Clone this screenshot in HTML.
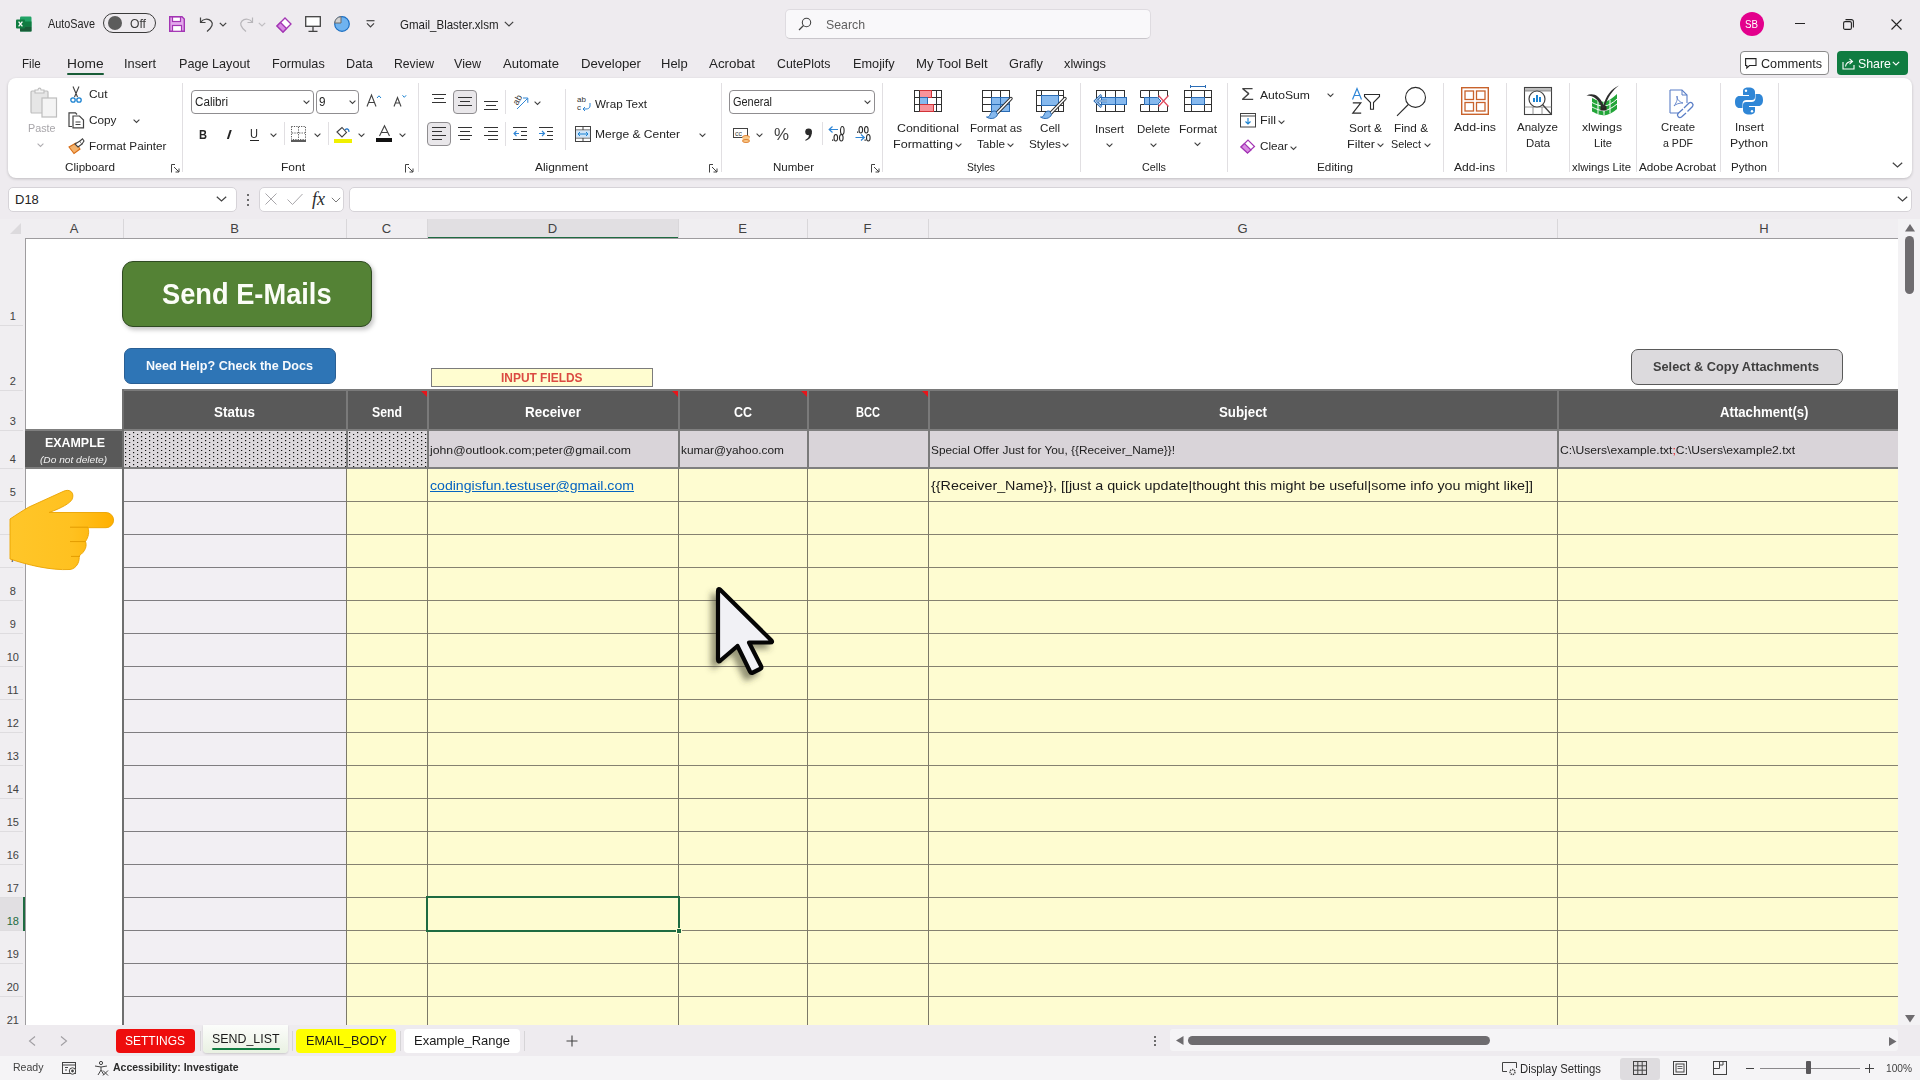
<!DOCTYPE html>
<html><head><meta charset="utf-8">
<style>
*{box-sizing:border-box}
html,body{margin:0;padding:0}
body{width:1920px;height:1080px;overflow:hidden;position:relative;background:#eeebef;font-family:"Liberation Sans",sans-serif;color:#242424}
.a{position:absolute}
.t{position:absolute;white-space:nowrap}
svg{position:absolute;overflow:visible}
</style></head><body>
<svg style="left:16px;top:16px;" width="16" height="16" viewBox="0 0 16 16"><rect x="4" y="0.5" width="11.5" height="15" rx="1.2" fill="#21a366"/>
<rect x="4" y="5.5" width="11.5" height="5" fill="#107c41"/>
<rect x="4" y="10.5" width="11.5" height="5" rx="0" fill="#185c37"/>
<rect x="0" y="3.5" width="9" height="9" rx="1" fill="#107c41"/>
<path d="M2.6 5.6 L6.4 10.4 M6.4 5.6 L2.6 10.4" stroke="#fff" stroke-width="1.3"/></svg>
<div class="t" style="left:48.00px;top:17.84px;font-size:12px;line-height:12px;color:#242424;transform:scaleX(0.9032);transform-origin:0 0;">AutoSave</div>
<div class="a" style="left:103px;top:13px;width:53px;height:20px;background:none;border:1.3px solid #3b3b3b;border-radius:10px"></div>
<div class="a" style="left:108px;top:16px;width:14px;height:14px;background:#5c5c5c;border-radius:50%"></div>
<div class="t" style="left:130.00px;top:17.84px;font-size:12px;line-height:12px;color:#3b3b3b;transform:scaleX(1.0136);transform-origin:0 0;">Off</div>
<svg style="left:169px;top:16px;" width="16" height="16" viewBox="0 0 16 16"><path d="M0.7 0.7 H13 L15.3 3 V15.3 H0.7 Z" fill="#e3a9ec" stroke="#a335b4" stroke-width="1.4"/>
<rect x="3.5" y="1" width="8" height="4.5" fill="#fff" stroke="#a335b4" stroke-width="1.2"/>
<rect x="3.5" y="9.5" width="9" height="5.8" fill="#fff" stroke="#a335b4" stroke-width="1.2"/></svg>
<svg style="left:199px;top:16px;" width="16" height="16" viewBox="0 0 16 16"><path d="M1.5 1.5 V6.5 H6.5" fill="none" stroke="#424242" stroke-width="1.2"/>
<path d="M1.8 6.2 C4 3 9 2 12 5 C14.5 7.5 13.5 11 8 15.5" fill="none" stroke="#424242" stroke-width="1.2"/></svg>
<svg style="left:219px;top:22px;" width="8" height="5" viewBox="0 0 8 5"><path d="M0.8 0.8 L4 4 L7.2 0.8" fill="none" stroke="#424242" stroke-width="1.2"/></svg>
<svg style="left:238px;top:16px;" width="16" height="16" viewBox="0 0 16 16"><path d="M14.5 1.5 V6.5 H9.5" fill="none" stroke="#b8b6ba" stroke-width="1.2"/>
<path d="M14.2 6.2 C12 3 7 2 4 5 C1.5 7.5 2.5 11 8 15.5" fill="none" stroke="#b8b6ba" stroke-width="1.2"/></svg>
<svg style="left:258px;top:22px;" width="8" height="5" viewBox="0 0 8 5"><path d="M0.8 0.8 L4 4 L7.2 0.8" fill="none" stroke="#c0bec2" stroke-width="1.2"/></svg>
<svg style="left:276px;top:16px;" width="16" height="16" viewBox="0 0 16 16"><path d="M1 10 L9 2 L15 8 L7 16 Z" fill="#fff" stroke="#a335b4" stroke-width="1.3"/>
<path d="M1 10 L4.5 6.5 L10.5 12.5 L7 16 Z" fill="#d88be3" stroke="#a335b4" stroke-width="1.3"/></svg>
<svg style="left:305px;top:16px;" width="16" height="16" viewBox="0 0 16 16"><rect x="0.7" y="0.7" width="14.6" height="9.6" fill="#fff" stroke="#424242" stroke-width="1.3"/>
<path d="M8 10.5 V15 M3.5 15.3 H12.5" stroke="#424242" stroke-width="1.3"/></svg>
<svg style="left:334px;top:16px;" width="16" height="16" viewBox="0 0 16 16"><circle cx="8" cy="8" r="7.3" fill="#6fb3f0" stroke="#1b6ec2" stroke-width="1.2"/>
<path d="M7 7 V0.7 A7 7 0 0 0 0.7 7 Z" fill="#d2d2d2" stroke="#6b6b6b" stroke-width="1"/></svg>
<svg style="left:366px;top:20px;" width="9" height="8" viewBox="0 0 9 8"><path d="M0.5 0.7 H8.5" stroke="#424242" stroke-width="1.2"/><path d="M1 3.3 L4.5 6.8 L8 3.3" fill="none" stroke="#424242" stroke-width="1.2"/></svg>
<div class="t" style="left:400.00px;top:18.00px;font-size:13px;line-height:13px;color:#242424;transform:scaleX(0.8854);transform-origin:0 0;">Gmail_Blaster.xlsm</div>
<svg style="left:504px;top:21px;" width="10" height="6" viewBox="0 0 10 6"><path d="M0.8 0.8 L5 5 L9.2 0.8" fill="none" stroke="#424242" stroke-width="1.2"/></svg>
<div class="a" style="left:785px;top:9px;width:366px;height:30px;background:#f9f8fa;border:1px solid #dedbe0;border-bottom-color:#c9c6cb;border-radius:5px"></div>
<svg style="left:798px;top:17px;" width="14" height="14" viewBox="0 0 14 14"><circle cx="8.5" cy="5.5" r="4.2" fill="none" stroke="#424242" stroke-width="1.1"/><path d="M5.5 8.5 L1 13" stroke="#424242" stroke-width="1.2"/></svg>
<div class="t" style="left:826.00px;top:18.00px;font-size:13px;line-height:13px;color:#5f5f5f;transform:scaleX(0.9468);transform-origin:0 0;">Search</div>
<div class="a" style="left:1740px;top:12px;width:24px;height:24px;background:#e3008c;border-radius:50%"></div>
<div class="t" style="left:1745.00px;top:19.54px;font-size:10px;line-height:10px;color:#fff;transform:scaleX(0.9745);transform-origin:0 0;">SB</div>
<div class="a" style="left:1795px;top:23px;width:10px;height:1px;background:#242424;"></div>
<svg style="left:1843px;top:19px;" width="11" height="11" viewBox="0 0 11 11"><rect x="0.6" y="2.6" width="7.8" height="7.8" rx="1.5" fill="none" stroke="#242424" stroke-width="1.1"/><path d="M2.5 0.6 H8.4 A2 2 0 0 1 10.4 2.6 V8.5" fill="none" stroke="#242424" stroke-width="1.1"/></svg>
<svg style="left:1891px;top:19px;" width="11" height="11" viewBox="0 0 11 11"><path d="M0.5 0.5 L10.5 10.5 M10.5 0.5 L0.5 10.5" stroke="#242424" stroke-width="1.1"/></svg>
<div class="t" style="left:22.00px;top:57.00px;font-size:13px;line-height:13px;color:#242424;transform:scaleX(0.8927);transform-origin:0 0;">File</div>
<div class="t" style="left:67.30px;top:57.00px;font-size:13px;line-height:13px;color:#242424;transform:scaleX(1.0583);transform-origin:0 0;">Home</div>
<div class="t" style="left:124.00px;top:57.00px;font-size:13px;line-height:13px;color:#242424;transform:scaleX(0.9842);transform-origin:0 0;">Insert</div>
<div class="t" style="left:179.00px;top:57.00px;font-size:13px;line-height:13px;color:#242424;transform:scaleX(0.9725);transform-origin:0 0;">Page Layout</div>
<div class="t" style="left:272.00px;top:57.00px;font-size:13px;line-height:13px;color:#242424;transform:scaleX(0.9727);transform-origin:0 0;">Formulas</div>
<div class="t" style="left:346.00px;top:57.00px;font-size:13px;line-height:13px;color:#242424;transform:scaleX(0.9723);transform-origin:0 0;">Data</div>
<div class="t" style="left:394.00px;top:57.00px;font-size:13px;line-height:13px;color:#242424;transform:scaleX(0.9384);transform-origin:0 0;">Review</div>
<div class="t" style="left:454.00px;top:57.00px;font-size:13px;line-height:13px;color:#242424;transform:scaleX(0.9662);transform-origin:0 0;">View</div>
<div class="t" style="left:502.70px;top:57.00px;font-size:13px;line-height:13px;color:#242424;transform:scaleX(1.0064);transform-origin:0 0;">Automate</div>
<div class="t" style="left:581.00px;top:57.00px;font-size:13px;line-height:13px;color:#242424;transform:scaleX(1.0125);transform-origin:0 0;">Developer</div>
<div class="t" style="left:661.00px;top:57.00px;font-size:13px;line-height:13px;color:#242424;transform:scaleX(0.9986);transform-origin:0 0;">Help</div>
<div class="t" style="left:709.00px;top:57.00px;font-size:13px;line-height:13px;color:#242424;transform:scaleX(1.0267);transform-origin:0 0;">Acrobat</div>
<div class="t" style="left:777.30px;top:57.00px;font-size:13px;line-height:13px;color:#242424;transform:scaleX(0.9474);transform-origin:0 0;">CutePlots</div>
<div class="t" style="left:853.30px;top:57.00px;font-size:13px;line-height:13px;color:#242424;transform:scaleX(0.9784);transform-origin:0 0;">Emojify</div>
<div class="t" style="left:916.00px;top:57.00px;font-size:13px;line-height:13px;color:#242424;transform:scaleX(1.0160);transform-origin:0 0;">My Tool Belt</div>
<div class="t" style="left:1009.30px;top:57.00px;font-size:13px;line-height:13px;color:#242424;transform:scaleX(0.9806);transform-origin:0 0;">Grafly</div>
<div class="t" style="left:1063.70px;top:57.00px;font-size:13px;line-height:13px;color:#242424;transform:scaleX(0.9853);transform-origin:0 0;">xlwings</div>
<div class="a" style="left:67px;top:73px;width:37px;height:2px;background:#185c37;border-radius:1px"></div>
<div class="a" style="left:1740px;top:51px;width:89px;height:24px;background:#fff;border:1px solid #8a8a8a;border-radius:4px"></div>
<svg style="left:1745px;top:58px;" width="12" height="11" viewBox="0 0 12 11"><path d="M0.6 0.6 H11 V7.5 H4.5 L1.8 10 V7.5 H0.6 Z" fill="none" stroke="#242424" stroke-width="1.1"/></svg>
<div class="t" style="left:1761.00px;top:57.00px;font-size:13px;line-height:13px;color:#242424;transform:scaleX(0.9706);transform-origin:0 0;">Comments</div>
<div class="a" style="left:1837px;top:51px;width:71px;height:24px;background:#107c41;border-radius:4px"></div>
<svg style="left:1842px;top:57px;" width="13" height="13" viewBox="0 0 13 13"><path d="M1 5 V12 H12 V8" fill="none" stroke="#fff" stroke-width="1.1"/><path d="M3.5 9.5 C4 6 6.5 4.5 10 4.5 M7.5 1.8 L10.5 4.5 L7.5 7.2" fill="none" stroke="#fff" stroke-width="1.1"/></svg>
<div class="t" style="left:1858.00px;top:57.00px;font-size:13px;line-height:13px;color:#fff;transform:scaleX(0.9512);transform-origin:0 0;">Share</div>
<svg style="left:1892px;top:61px;" width="8" height="5" viewBox="0 0 8 5"><path d="M0.8 0.8 L4 4 L7.2 0.8" fill="none" stroke="#fff" stroke-width="1.1"/></svg>
<div class="a" style="left:8px;top:78px;width:1904px;height:100px;background:#fff;border-radius:8px;box-shadow:0 1px 3px rgba(0,0,0,.2)"></div>
<svg style="left:30px;top:86px;" width="28" height="32" viewBox="0 0 28 32"><rect x="1" y="5" width="17" height="22" rx="1" fill="#e6e6e6" stroke="#bdbdbd" stroke-width="1.2"/>
<path d="M5 4 H8 C8 1.5 11 1.5 11 4 H14 V7 H5 Z" fill="#f4f4f4" stroke="#bdbdbd" stroke-width="1.1"/>
<rect x="12" y="12" width="14.5" height="19" fill="#f4f4f4" stroke="#bdbdbd" stroke-width="1.2"/></svg>
<div class="t" style="left:27.50px;top:123.07px;font-size:11.5px;line-height:11.5px;color:#a8a6aa;transform:scaleX(0.9351);transform-origin:0 0;">Paste</div>
<svg style="left:37px;top:143px;" width="7" height="4" viewBox="0 0 7 4"><path d="M0.6 0.6 L3.5 3.4 L6.4 0.6" fill="none" stroke="#b0aeb2" stroke-width="1.1"/></svg>
<svg style="left:70px;top:86px;" width="12" height="17" viewBox="0 0 12 17"><path d="M3 0.5 L7.5 11 M9 0.5 L4.5 11" stroke="#424242" stroke-width="1.1"/>
<circle cx="3" cy="14" r="2.2" fill="none" stroke="#1b82d1" stroke-width="1.3"/><circle cx="9" cy="14" r="2.2" fill="none" stroke="#1b82d1" stroke-width="1.3"/></svg>
<div class="t" style="left:88.50px;top:89.07px;font-size:11.5px;line-height:11.5px;color:#242424;transform:scaleX(1.0338);transform-origin:0 0;">Cut</div>
<svg style="left:68px;top:112px;" width="17" height="17" viewBox="0 0 17 17"><path d="M4 14.5 H1 V0.8 H7.5 L9 2.5" fill="none" stroke="#424242" stroke-width="1.2"/>
<path d="M5 4 H11.5 L15.5 8 V15.8 H5 Z" fill="#fff" stroke="#424242" stroke-width="1.2"/><path d="M7.5 10 H12.5 M7.5 12.5 H12.5" stroke="#424242" stroke-width="1"/></svg>
<div class="t" style="left:88.50px;top:114.87px;font-size:11.5px;line-height:11.5px;color:#242424;transform:scaleX(1.0243);transform-origin:0 0;">Copy</div>
<svg style="left:133px;top:119px;" width="7" height="4" viewBox="0 0 7 4"><path d="M0.6 0.6 L3.5 3.4 L6.4 0.6" fill="none" stroke="#424242" stroke-width="1.1"/></svg>
<svg style="left:68px;top:138px;" width="17" height="16" viewBox="0 0 17 16"><path d="M1 9 L8 5 L12 11 L6 15.5 Z" fill="#f4b26b" stroke="#d86d16" stroke-width="1.1"/>
<path d="M7 6 L12 3 L14 6 L10 9 Z" fill="#fff" stroke="#424242" stroke-width="1.1"/><path d="M12 3 L14.5 0.8 L16 3 L14 6" fill="#fff" stroke="#424242" stroke-width="1.1"/></svg>
<div class="t" style="left:88.50px;top:141.17px;font-size:11.5px;line-height:11.5px;color:#242424;transform:scaleX(1.0190);transform-origin:0 0;">Format Painter</div>
<div class="t" style="left:64.50px;top:162.27px;font-size:11.5px;line-height:11.5px;color:#242424;transform:scaleX(1.0157);transform-origin:0 0;">Clipboard</div>
<svg style="left:171px;top:164px;" width="9" height="9" viewBox="0 0 9 9"><path d="M0.5 8.5 V0.5 H4" fill="none" stroke="#424242" stroke-width="1"/><path d="M3 3 L8 8 M8 4.5 V8 H4.5" fill="none" stroke="#424242" stroke-width="1"/></svg>
<div class="a" style="left:182px;top:83px;width:1px;height:89px;background:#e1dfe2;"></div>
<div class="a" style="left:191px;top:90px;width:123px;height:24px;background:#fff;border:1px solid #8f8d90;border-radius:4px"></div>
<div class="t" style="left:195.00px;top:96.34px;font-size:12px;line-height:12px;color:#242424;transform:scaleX(0.9703);transform-origin:0 0;">Calibri</div>
<svg style="left:303px;top:100px;" width="7" height="4" viewBox="0 0 7 4"><path d="M0.6 0.6 L3.5 3.4 L6.4 0.6" fill="none" stroke="#424242" stroke-width="1.1"/></svg>
<div class="a" style="left:316px;top:90px;width:43px;height:24px;background:#fff;border:1px solid #8f8d90;border-radius:4px"></div>
<div class="t" style="left:318.50px;top:96.34px;font-size:12px;line-height:12px;color:#242424;transform:scaleX(0.9739);transform-origin:0 0;">9</div>
<svg style="left:349px;top:100px;" width="7" height="4" viewBox="0 0 7 4"><path d="M0.6 0.6 L3.5 3.4 L6.4 0.6" fill="none" stroke="#424242" stroke-width="1.1"/></svg>
<svg style="left:366px;top:94px;" width="16" height="13" viewBox="0 0 16 13"><path d="M1 12.5 L5.5 1 L10 12.5 M2.8 8.5 H8.2" fill="none" stroke="#424242" stroke-width="1.1"/><path d="M11 4 L13 1.8 L15 4" fill="none" stroke="#1b82d1" stroke-width="1"/></svg>
<svg style="left:393px;top:94px;" width="14" height="13" viewBox="0 0 14 13"><path d="M1 12.5 L4.5 3.5 L8 12.5 M2.3 9 H6.7" fill="none" stroke="#424242" stroke-width="1.1"/><path d="M9.5 1.3 L11.3 3.3 L13.1 1.3" fill="none" stroke="#1b82d1" stroke-width="1"/></svg>
<div class="t" style="left:199.00px;top:127.50px;font-size:13px;line-height:13px;color:#242424;font-weight:bold;transform:scaleX(0.8521);transform-origin:0 0;">B</div>
<div class="t" style="left:226.00px;top:127.50px;font-size:13px;line-height:13px;color:#242424;font-style:italic;transform:scaleX(1.6613);transform-origin:0 0;">I</div>
<div class="t" style="left:250.00px;top:127.84px;font-size:12px;line-height:12px;color:#242424;transform:scaleX(0.9231);transform-origin:0 0;">U</div>
<div class="a" style="left:250px;top:140px;width:9px;height:1px;background:#242424;"></div>
<svg style="left:270px;top:133px;" width="7" height="4" viewBox="0 0 7 4"><path d="M0.6 0.6 L3.5 3.4 L6.4 0.6" fill="none" stroke="#424242" stroke-width="1.1"/></svg>
<div class="a" style="left:284px;top:122px;width:1px;height:23px;background:#e1dfe2;"></div>
<svg style="left:291px;top:126px;" width="15" height="16" viewBox="0 0 15 16"><rect x="0.5" y="0.5" width="14" height="13" fill="none" stroke="#424242" stroke-width="0.9" stroke-dasharray="1.2 1.2"/><path d="M7.5 1 V13 M1 7 H14" stroke="#424242" stroke-width="0.9" stroke-dasharray="1.2 1.2"/><path d="M0 15 H15" stroke="#242424" stroke-width="1.5"/></svg>
<svg style="left:314px;top:133px;" width="7" height="4" viewBox="0 0 7 4"><path d="M0.6 0.6 L3.5 3.4 L6.4 0.6" fill="none" stroke="#424242" stroke-width="1.1"/></svg>
<div class="a" style="left:328px;top:122px;width:1px;height:23px;background:#e1dfe2;"></div>
<svg style="left:334px;top:126px;" width="18" height="17" viewBox="0 0 18 17"><path d="M3 6 L8 1.5 L12.5 6.5 L8 11 Z" fill="#fff" stroke="#424242" stroke-width="1.1"/><path d="M11 4 C13 2 15 3 15 6" fill="none" stroke="#1b6ec2" stroke-width="1.2"/><rect x="0" y="13" width="18" height="4" fill="#f0f000"/></svg>
<svg style="left:358px;top:133px;" width="7" height="4" viewBox="0 0 7 4"><path d="M0.6 0.6 L3.5 3.4 L6.4 0.6" fill="none" stroke="#424242" stroke-width="1.1"/></svg>
<svg style="left:376px;top:125px;" width="17" height="18" viewBox="0 0 17 18"><path d="M3.5 11 L8.5 0.8 L13.5 11 M5.2 7.5 H11.8" fill="none" stroke="#424242" stroke-width="1.1"/><rect x="0" y="13" width="16" height="4" fill="#111"/></svg>
<svg style="left:399px;top:133px;" width="7" height="4" viewBox="0 0 7 4"><path d="M0.6 0.6 L3.5 3.4 L6.4 0.6" fill="none" stroke="#424242" stroke-width="1.1"/></svg>
<div class="t" style="left:281.00px;top:162.27px;font-size:11.5px;line-height:11.5px;color:#242424;transform:scaleX(1.0429);transform-origin:0 0;">Font</div>
<svg style="left:405px;top:164px;" width="9" height="9" viewBox="0 0 9 9"><path d="M0.5 8.5 V0.5 H4" fill="none" stroke="#424242" stroke-width="1"/><path d="M3 3 L8 8 M8 4.5 V8 H4.5" fill="none" stroke="#424242" stroke-width="1"/></svg>
<div class="a" style="left:418px;top:83px;width:1px;height:89px;background:#e1dfe2;"></div>
<svg style="left:432px;top:94px;" width="14" height="13" viewBox="0 0 14 13"><path d="M0.0 0.5 H14.0" stroke="#333" stroke-width="1"/><path d="M2.0 4.5 H12.0" stroke="#333" stroke-width="1"/><path d="M0.0 8.5 H14.0" stroke="#333" stroke-width="1"/></svg>
<div class="a" style="left:453px;top:90px;width:24px;height:24px;background:#e9e7ea;border:1px solid #8f8d90;border-radius:4px"></div>
<svg style="left:458px;top:97px;" width="14" height="13" viewBox="0 0 14 13"><path d="M0.0 0.5 H14.0" stroke="#333" stroke-width="1"/><path d="M2.0 4.5 H12.0" stroke="#333" stroke-width="1"/><path d="M0.0 8.5 H14.0" stroke="#333" stroke-width="1"/></svg>
<svg style="left:484px;top:101px;" width="14" height="13" viewBox="0 0 14 13"><path d="M0.0 0.5 H14.0" stroke="#333" stroke-width="1"/><path d="M2.0 4.5 H12.0" stroke="#333" stroke-width="1"/><path d="M0.0 8.5 H14.0" stroke="#333" stroke-width="1"/></svg>
<div class="a" style="left:505px;top:90px;width:1px;height:24px;background:#e1dfe2;"></div>
<svg style="left:512px;top:93px;" width="17" height="17" viewBox="0 0 17 17"><g transform="rotate(-60 6 6)"><text x="0" y="9" font-size="9" font-family="Liberation Sans" fill="#333">ab</text></g><path d="M5 16 L15.5 5.5 M11 5 H15.8 V9.8" fill="none" stroke="#2f86d6" stroke-width="1"/></svg>
<svg style="left:534px;top:101px;" width="7" height="4" viewBox="0 0 7 4"><path d="M0.6 0.6 L3.5 3.4 L6.4 0.6" fill="none" stroke="#424242" stroke-width="1.1"/></svg>
<div class="a" style="left:427px;top:122px;width:24px;height:24px;background:#e9e7ea;border:1px solid #8f8d90;border-radius:4px"></div>
<svg style="left:432px;top:127px;" width="14" height="17" viewBox="0 0 14 17"><path d="M0 0.5 H14" stroke="#333" stroke-width="1"/><path d="M0 4.5 H10" stroke="#333" stroke-width="1"/><path d="M0 8.5 H14" stroke="#333" stroke-width="1"/><path d="M0 12.5 H10" stroke="#333" stroke-width="1"/></svg>
<svg style="left:458px;top:127px;" width="14" height="17" viewBox="0 0 14 17"><path d="M0.0 0.5 H14.0" stroke="#333" stroke-width="1"/><path d="M2.0 4.5 H12.0" stroke="#333" stroke-width="1"/><path d="M0.0 8.5 H14.0" stroke="#333" stroke-width="1"/><path d="M2.0 12.5 H12.0" stroke="#333" stroke-width="1"/></svg>
<svg style="left:484px;top:127px;" width="14" height="17" viewBox="0 0 14 17"><path d="M0 0.5 H14" stroke="#333" stroke-width="1"/><path d="M4 4.5 H14" stroke="#333" stroke-width="1"/><path d="M0 8.5 H14" stroke="#333" stroke-width="1"/><path d="M4 12.5 H14" stroke="#333" stroke-width="1"/></svg>
<div class="a" style="left:505px;top:122px;width:1px;height:24px;background:#e1dfe2;"></div>
<svg style="left:513px;top:127px;" width="15" height="14" viewBox="0 0 15 14"><path d="M0 0.5 H14 M8 4.5 H14 M8 8.5 H14 M0 12.5 H14" stroke="#333" stroke-width="1"/><path d="M6 6.5 H1 M3.5 4 L1 6.5 L3.5 9" fill="none" stroke="#2f86d6" stroke-width="1.1"/></svg>
<svg style="left:539px;top:127px;" width="15" height="14" viewBox="0 0 15 14"><path d="M0 0.5 H14 M8 4.5 H14 M8 8.5 H14 M0 12.5 H14" stroke="#333" stroke-width="1"/><path d="M0 6.5 H5.5 M3 4 L5.5 6.5 L3 9" fill="none" stroke="#2f86d6" stroke-width="1.1"/></svg>
<div class="a" style="left:565px;top:89px;width:1px;height:61px;background:#e1dfe2;"></div>
<svg style="left:577px;top:95px;" width="15" height="16" viewBox="0 0 15 16"><text x="0" y="7" font-size="8" font-family="Liberation Sans" fill="#333">ab</text><text x="0" y="15" font-size="8" font-family="Liberation Sans" fill="#333">c</text><path d="M13 8 V11 C13 13 11 14 9 14 H6 M8 12 L6 14 L8 16" fill="none" stroke="#2f86d6" stroke-width="1"/></svg>
<div class="t" style="left:595.00px;top:98.77px;font-size:11.5px;line-height:11.5px;color:#242424;transform:scaleX(1.0127);transform-origin:0 0;">Wrap Text</div>
<svg style="left:575px;top:126px;" width="16" height="16" viewBox="0 0 16 16"><rect x="0.5" y="0.5" width="15" height="15" fill="#fff" stroke="#424242" stroke-width="1"/><path d="M0.5 4 H15.5 M0.5 12 H15.5 M8 0.5 V4 M8 12 V15.5" stroke="#424242" stroke-width="1"/><rect x="1" y="4.5" width="14" height="7" fill="#cfe4f7"/><path d="M3 8 H13 M5 6 L3 8 L5 10 M11 6 L13 8 L11 10" fill="none" stroke="#1b82d1" stroke-width="1"/></svg>
<div class="t" style="left:595.00px;top:129.27px;font-size:11.5px;line-height:11.5px;color:#242424;transform:scaleX(1.0471);transform-origin:0 0;">Merge &amp; Center</div>
<svg style="left:699px;top:133px;" width="7" height="4" viewBox="0 0 7 4"><path d="M0.6 0.6 L3.5 3.4 L6.4 0.6" fill="none" stroke="#424242" stroke-width="1.1"/></svg>
<div class="t" style="left:535.00px;top:162.27px;font-size:11.5px;line-height:11.5px;color:#242424;transform:scaleX(1.0364);transform-origin:0 0;">Alignment</div>
<svg style="left:709px;top:164px;" width="9" height="9" viewBox="0 0 9 9"><path d="M0.5 8.5 V0.5 H4" fill="none" stroke="#424242" stroke-width="1"/><path d="M3 3 L8 8 M8 4.5 V8 H4.5" fill="none" stroke="#424242" stroke-width="1"/></svg>
<div class="a" style="left:721px;top:83px;width:1px;height:89px;background:#e1dfe2;"></div>
<div class="a" style="left:729px;top:90px;width:146px;height:24px;background:#fff;border:1px solid #8f8d90;border-radius:4px"></div>
<div class="t" style="left:733.00px;top:96.34px;font-size:12px;line-height:12px;color:#242424;transform:scaleX(0.9135);transform-origin:0 0;">General</div>
<svg style="left:864px;top:100px;" width="7" height="4" viewBox="0 0 7 4"><path d="M0.6 0.6 L3.5 3.4 L6.4 0.6" fill="none" stroke="#424242" stroke-width="1.1"/></svg>
<svg style="left:733px;top:128px;" width="17" height="14" viewBox="0 0 17 14"><rect x="0.5" y="0.5" width="14" height="9" fill="#fff" stroke="#424242" stroke-width="1"/><text x="2" y="8" font-size="7" font-family="Liberation Sans" fill="#424242">cc</text><ellipse cx="13" cy="9" rx="3.5" ry="1.5" fill="#f9c98a" stroke="#d86d16" stroke-width="0.8"/><rect x="9.5" y="9" width="7" height="4" fill="#f9c98a"/><ellipse cx="13" cy="13" rx="3.5" ry="1.5" fill="#f9c98a" stroke="#d86d16" stroke-width="0.8"/></svg>
<svg style="left:756px;top:133px;" width="7" height="4" viewBox="0 0 7 4"><path d="M0.6 0.6 L3.5 3.4 L6.4 0.6" fill="none" stroke="#424242" stroke-width="1.1"/></svg>
<div class="t" style="left:774.00px;top:127.46px;font-size:16px;line-height:16px;color:#424242;transform:scaleX(1.0544);transform-origin:0 0;">%</div>
<svg style="left:804px;top:128px;" width="9" height="13" viewBox="0 0 9 13"><circle cx="4.6" cy="3.8" r="3.4" fill="#2b2b2b"/><path d="M7.6 4.5 C8 8.5 5.5 11.5 1.5 12.8 L1.2 12 C4 10.5 5.5 8.5 5 6 Z" fill="#2b2b2b"/></svg>
<div class="a" style="left:822px;top:122px;width:1px;height:23px;background:#e1dfe2;"></div>
<svg style="left:828px;top:126px;" width="18" height="16" viewBox="0 0 18 16"><path d="M10 3.5 H1.5 M4.5 0.5 L1.2 3.5 L4.5 6.5" fill="none" stroke="#2f86d6" stroke-width="1.2"/><ellipse cx="14.3" cy="4.5" rx="1.8" ry="4.0" fill="none" stroke="#2b2b2b" stroke-width="1.1"/><rect x="4" y="13.5" width="1.3" height="1.3" fill="#2b2b2b"/><ellipse cx="7.8" cy="11.75" rx="1.8" ry="3.25" fill="none" stroke="#2b2b2b" stroke-width="1.1"/><ellipse cx="13.3" cy="11.75" rx="1.8" ry="3.25" fill="none" stroke="#2b2b2b" stroke-width="1.1"/></svg>
<svg style="left:855px;top:126px;" width="18" height="16" viewBox="0 0 18 16"><rect x="2" y="5.5" width="1.3" height="1.3" fill="#2b2b2b"/><ellipse cx="5.8" cy="3.75" rx="1.8" ry="3.25" fill="none" stroke="#2b2b2b" stroke-width="1.1"/><ellipse cx="11.3" cy="3.75" rx="1.8" ry="3.25" fill="none" stroke="#2b2b2b" stroke-width="1.1"/><path d="M0.5 11.5 H9 M6 8.5 L9.3 11.5 L6 14.5" fill="none" stroke="#2f86d6" stroke-width="1.2"/><rect x="9.5" y="13.5" width="1.3" height="1.3" fill="#2b2b2b"/><ellipse cx="13.3" cy="11.75" rx="1.8" ry="3.25" fill="none" stroke="#2b2b2b" stroke-width="1.1"/></svg>
<div class="t" style="left:773.00px;top:162.27px;font-size:11.5px;line-height:11.5px;color:#242424;transform:scaleX(1.0024);transform-origin:0 0;">Number</div>
<svg style="left:871px;top:164px;" width="9" height="9" viewBox="0 0 9 9"><path d="M0.5 8.5 V0.5 H4" fill="none" stroke="#424242" stroke-width="1"/><path d="M3 3 L8 8 M8 4.5 V8 H4.5" fill="none" stroke="#424242" stroke-width="1"/></svg>
<div class="a" style="left:882px;top:83px;width:1px;height:89px;background:#e1dfe2;"></div>
<svg style="left:914px;top:90px;" width="28" height="22" viewBox="0 0 28 22"><rect x="0.5" y="0.5" width="27" height="21" fill="#fff" stroke="#303030" stroke-width="1"/>
<path d="M22.5 0.5 V21.5 M0.5 7.5 H28 M0.5 14.5 H28" stroke="#303030" stroke-width="1"/>
<rect x="5.5" y="0.5" width="12" height="7" fill="#f7939b" stroke="#d13438" stroke-width="1"/>
<rect x="5.5" y="7.5" width="8" height="7" fill="#86b9ee" stroke="#2a6cb5" stroke-width="1"/>
<rect x="5.5" y="14.5" width="14" height="7" fill="#f7939b" stroke="#d13438" stroke-width="1"/>
<path d="M5.5 0.5 V21.5" stroke="#303030" stroke-width="1"/></svg>
<svg style="left:982px;top:90px;" width="30" height="30" viewBox="0 0 30 30"><rect x="0.5" y="0.5" width="27" height="21" fill="#fff" stroke="#303030" stroke-width="1"/>
<rect x="9.5" y="7.5" width="18" height="14" fill="#86b9ee" stroke="#2a6cb5" stroke-width="1"/>
<path d="M9.5 0.5 V21.5 M18.5 0.5 V21.5 M0.5 7.5 H28 M0.5 14.5 H28" stroke="#303030" stroke-width="1"/>
<path d="M9.5 7.5 V21.5 M9.5 7.5 H27.5 M18.5 7.5 V21.5 M9.5 14.5 H27.5" stroke="#2a6cb5" stroke-width="1"/><path d="M29 8.5 L14 24" stroke="#303030" stroke-width="3.4" stroke-linecap="round"/><path d="M29 8.5 L14 24" stroke="#fff" stroke-width="1.5" stroke-linecap="round"/>
<path d="M13.5 21 C10 20.5 8.5 23 8 25 C7.5 26.5 6 27 4.5 27 C8 29.5 14 29 15.5 24.5 Z" fill="#86b9ee" stroke="#2a6cb5" stroke-width="1"/></svg>
<svg style="left:1036px;top:90px;" width="30" height="30" viewBox="0 0 30 30"><rect x="0.5" y="0.5" width="27" height="21" fill="#fff" stroke="#303030" stroke-width="1"/>
<path d="M5.5 0.5 V21.5 M22.5 0.5 V21.5 M0.5 5.5 H28 M0.5 15.5 H28" stroke="#303030" stroke-width="1"/>
<rect x="5.5" y="5.5" width="17" height="10" fill="#86b9ee" stroke="#2a6cb5" stroke-width="1"/><path d="M29 8.5 L14 24" stroke="#303030" stroke-width="3.4" stroke-linecap="round"/><path d="M29 8.5 L14 24" stroke="#fff" stroke-width="1.5" stroke-linecap="round"/>
<path d="M13.5 21 C10 20.5 8.5 23 8 25 C7.5 26.5 6 27 4.5 27 C8 29.5 14 29 15.5 24.5 Z" fill="#86b9ee" stroke="#2a6cb5" stroke-width="1"/></svg>
<div class="t" style="left:897.00px;top:122.77px;font-size:11.5px;line-height:11.5px;color:#242424;transform:scaleX(1.0775);transform-origin:0 0;">Conditional</div>
<div class="t" style="left:893.00px;top:138.77px;font-size:11.5px;line-height:11.5px;color:#242424;transform:scaleX(1.0916);transform-origin:0 0;">Formatting</div>
<svg style="left:955px;top:143px;" width="7" height="4" viewBox="0 0 7 4"><path d="M0.6 0.6 L3.5 3.4 L6.4 0.6" fill="none" stroke="#424242" stroke-width="1.1"/></svg>
<div class="t" style="left:970.00px;top:122.77px;font-size:11.5px;line-height:11.5px;color:#242424;transform:scaleX(1.0046);transform-origin:0 0;">Format as</div>
<div class="t" style="left:977.00px;top:138.77px;font-size:11.5px;line-height:11.5px;color:#242424;transform:scaleX(1.0184);transform-origin:0 0;">Table</div>
<svg style="left:1007px;top:143px;" width="7" height="4" viewBox="0 0 7 4"><path d="M0.6 0.6 L3.5 3.4 L6.4 0.6" fill="none" stroke="#424242" stroke-width="1.1"/></svg>
<div class="t" style="left:1040.00px;top:122.77px;font-size:11.5px;line-height:11.5px;color:#242424;transform:scaleX(1.0095);transform-origin:0 0;">Cell</div>
<div class="t" style="left:1029.00px;top:138.77px;font-size:11.5px;line-height:11.5px;color:#242424;transform:scaleX(1.0218);transform-origin:0 0;">Styles</div>
<svg style="left:1062px;top:143px;" width="7" height="4" viewBox="0 0 7 4"><path d="M0.6 0.6 L3.5 3.4 L6.4 0.6" fill="none" stroke="#424242" stroke-width="1.1"/></svg>
<div class="t" style="left:967.00px;top:162.27px;font-size:11.5px;line-height:11.5px;color:#242424;transform:scaleX(0.8941);transform-origin:0 0;">Styles</div>
<div class="a" style="left:1080px;top:83px;width:1px;height:89px;background:#e1dfe2;"></div>
<svg style="left:1094px;top:90px;" width="33" height="22" viewBox="0 0 33 22"><rect x="2.5" y="0.5" width="28" height="21" fill="#fff" stroke="#303030" stroke-width="1"/>
<path d="M11.5 0.5 V21.5 M21.5 0.5 V21.5 M2.5 7.5 H30.5 M2.5 14.5 H30.5" stroke="#303030" stroke-width="1"/>
<rect x="7.5" y="7.5" width="25" height="7" fill="#86b9ee" stroke="#2a6cb5" stroke-width="1"/><path d="M21.5 7.5 V14.5" stroke="#2a6cb5" stroke-width="1"/>
<path d="M13 11 H2.5 M7.5 5 L1.2 11 L7.5 17" fill="none" stroke="#2a6cb5" stroke-width="2.6"/><path d="M13 11 H2.5 M7.5 5 L1.2 11 L7.5 17" fill="none" stroke="#dbeafb" stroke-width="1"/></svg>
<div class="t" style="left:1095.00px;top:124.27px;font-size:11.5px;line-height:11.5px;color:#242424;transform:scaleX(1.0083);transform-origin:0 0;">Insert</div>
<svg style="left:1106px;top:143px;" width="7" height="4" viewBox="0 0 7 4"><path d="M0.6 0.6 L3.5 3.4 L6.4 0.6" fill="none" stroke="#424242" stroke-width="1.1"/></svg>
<svg style="left:1140px;top:90px;" width="30" height="22" viewBox="0 0 30 22"><path d="M0.5 7.5 V0.5 H27.5 V6 M27.5 16 V21.5 H0.5 V14.5" fill="none" stroke="#303030" stroke-width="1"/>
<path d="M9.5 0.5 V21.5 M18.5 0.5 V7.5 M18.5 14.5 V21.5 M0.5 7.5 H4.5 M0.5 14.5 H4.5 M9.5 7.5 H17 M9.5 14.5 H17" stroke="#303030" stroke-width="1"/>
<path d="M4.5 7.5 H17.5 L21 11 L17.5 14.5 H4.5 Z" fill="#86b9ee" stroke="#2a6cb5" stroke-width="1"/><path d="M9.5 7.5 V14.5" stroke="#2a6cb5" stroke-width="1"/>
<path d="M18.5 5.5 L28.5 16.5 M28.5 5.5 L18.5 16.5" stroke="#e0475a" stroke-width="1.2"/></svg>
<div class="t" style="left:1137.00px;top:124.27px;font-size:11.5px;line-height:11.5px;color:#242424;transform:scaleX(0.9927);transform-origin:0 0;">Delete</div>
<svg style="left:1150px;top:143px;" width="7" height="4" viewBox="0 0 7 4"><path d="M0.6 0.6 L3.5 3.4 L6.4 0.6" fill="none" stroke="#424242" stroke-width="1.1"/></svg>
<svg style="left:1184px;top:85px;" width="28" height="27" viewBox="0 0 28 27"><rect x="0.5" y="5.5" width="27" height="21" fill="#fff" stroke="#303030" stroke-width="1"/>
<path d="M7.5 5.5 V26.5 M20.5 5.5 V26.5 M0.5 12.5 H28 M0.5 19.5 H28" stroke="#303030" stroke-width="1"/>
<rect x="7.5" y="12.5" width="13" height="7" fill="#86b9ee" stroke="#2a6cb5" stroke-width="1"/>
<path d="M6 1.5 H22 M6.5 0 V3 M21.5 0 V3" stroke="#2a6cb5" stroke-width="1"/></svg>
<div class="t" style="left:1179.00px;top:123.77px;font-size:11.5px;line-height:11.5px;color:#242424;transform:scaleX(1.0433);transform-origin:0 0;">Format</div>
<svg style="left:1194px;top:142px;" width="7" height="4" viewBox="0 0 7 4"><path d="M0.6 0.6 L3.5 3.4 L6.4 0.6" fill="none" stroke="#424242" stroke-width="1.1"/></svg>
<div class="t" style="left:1142.00px;top:162.27px;font-size:11.5px;line-height:11.5px;color:#242424;transform:scaleX(0.9389);transform-origin:0 0;">Cells</div>
<div class="a" style="left:1227px;top:83px;width:1px;height:89px;background:#e1dfe2;"></div>
<div class="t" style="left:1240.50px;top:86.96px;font-size:16px;line-height:16px;color:#424242;transform:scaleX(1.3143);transform-origin:0 0;">Σ</div>
<div class="t" style="left:1260.00px;top:89.77px;font-size:11.5px;line-height:11.5px;color:#242424;transform:scaleX(1.0570);transform-origin:0 0;">AutoSum</div>
<svg style="left:1327px;top:93px;" width="7" height="4" viewBox="0 0 7 4"><path d="M0.6 0.6 L3.5 3.4 L6.4 0.6" fill="none" stroke="#424242" stroke-width="1.1"/></svg>
<svg style="left:1240px;top:113px;" width="16" height="15" viewBox="0 0 16 15"><rect x="0.5" y="0.5" width="15" height="13.5" fill="#fff" stroke="#424242" stroke-width="1"/><path d="M0.5 3 H15.5" stroke="#424242" stroke-width="1"/><path d="M8 5 V11 M5.5 8.5 L8 11 L10.5 8.5" fill="none" stroke="#1b82d1" stroke-width="1.1"/></svg>
<div class="t" style="left:1260.00px;top:115.27px;font-size:11.5px;line-height:11.5px;color:#242424;transform:scaleX(1.0892);transform-origin:0 0;">Fill</div>
<svg style="left:1278px;top:120px;" width="7" height="4" viewBox="0 0 7 4"><path d="M0.6 0.6 L3.5 3.4 L6.4 0.6" fill="none" stroke="#424242" stroke-width="1.1"/></svg>
<svg style="left:1240px;top:138px;" width="16" height="15" viewBox="0 0 16 15"><path d="M1 9 L8 2 L14.5 8.5 L7.5 15 Z" fill="#fff" stroke="#a335b4" stroke-width="1.2"/><path d="M1 9 L4.5 5.5 L11 12 L7.5 15 Z" fill="#d88be3" stroke="#a335b4" stroke-width="1.2"/></svg>
<div class="t" style="left:1260.00px;top:141.27px;font-size:11.5px;line-height:11.5px;color:#242424;transform:scaleX(1.0188);transform-origin:0 0;">Clear</div>
<svg style="left:1290px;top:146px;" width="7" height="4" viewBox="0 0 7 4"><path d="M0.6 0.6 L3.5 3.4 L6.4 0.6" fill="none" stroke="#424242" stroke-width="1.1"/></svg>
<svg style="left:1352px;top:88px;" width="28" height="26" viewBox="0 0 28 26"><path d="M0.5 11.5 L5 0.5 L9.5 11.5 M2.2 7.5 H7.8" fill="none" stroke="#2f86d6" stroke-width="1.2"/><path d="M0.8 14.8 H8.8 L0.8 25.2 H9.2" fill="none" stroke="#2b2b2b" stroke-width="1.2"/><path d="M12.5 6.5 H27.5 V8.5 L21.5 14.5 V21.3 H18.5 V14.5 L12.5 8.5 Z" fill="#fff" stroke="#2b2b2b" stroke-width="1.1"/></svg>
<div class="t" style="left:1349.00px;top:122.77px;font-size:11.5px;line-height:11.5px;color:#242424;transform:scaleX(1.0326);transform-origin:0 0;">Sort &amp;</div>
<div class="t" style="left:1347.00px;top:138.77px;font-size:11.5px;line-height:11.5px;color:#242424;transform:scaleX(1.0956);transform-origin:0 0;">Filter</div>
<svg style="left:1377px;top:143px;" width="7" height="4" viewBox="0 0 7 4"><path d="M0.6 0.6 L3.5 3.4 L6.4 0.6" fill="none" stroke="#424242" stroke-width="1.1"/></svg>
<svg style="left:1396px;top:86px;" width="31" height="31" viewBox="0 0 31 31"><circle cx="19.5" cy="11.4" r="10" fill="#fff" stroke="#2b2b2b" stroke-width="1.1"/><path d="M12.3 18.5 L1 29.8" stroke="#2b2b2b" stroke-width="1.1"/></svg>
<div class="t" style="left:1394.00px;top:122.77px;font-size:11.5px;line-height:11.5px;color:#242424;transform:scaleX(1.0229);transform-origin:0 0;">Find &amp;</div>
<div class="t" style="left:1391.00px;top:138.77px;font-size:11.5px;line-height:11.5px;color:#242424;transform:scaleX(0.9386);transform-origin:0 0;">Select</div>
<svg style="left:1424px;top:143px;" width="7" height="4" viewBox="0 0 7 4"><path d="M0.6 0.6 L3.5 3.4 L6.4 0.6" fill="none" stroke="#424242" stroke-width="1.1"/></svg>
<div class="t" style="left:1317.00px;top:162.27px;font-size:11.5px;line-height:11.5px;color:#242424;transform:scaleX(1.0238);transform-origin:0 0;">Editing</div>
<div class="a" style="left:1443px;top:83px;width:1px;height:89px;background:#e1dfe2;"></div>
<svg style="left:1461px;top:87px;" width="28" height="28" viewBox="0 0 28 28"><rect x="0.7" y="0.7" width="26.6" height="26.6" fill="#fff" stroke="#c8622b" stroke-width="1.4"/><rect x="4" y="4" width="8.5" height="8.5" fill="none" stroke="#c8622b" stroke-width="1.3"/><rect x="15.5" y="4" width="8.5" height="8.5" fill="none" stroke="#c8622b" stroke-width="1.3"/><rect x="4" y="15.5" width="8.5" height="8.5" fill="none" stroke="#c8622b" stroke-width="1.3"/><rect x="15.5" y="15.5" width="8.5" height="8.5" fill="none" stroke="#c8622b" stroke-width="1.3"/></svg>
<div class="t" style="left:1454.00px;top:122.27px;font-size:11.5px;line-height:11.5px;color:#242424;transform:scaleX(1.0771);transform-origin:0 0;">Add-ins</div>
<div class="t" style="left:1454.00px;top:162.27px;font-size:11.5px;line-height:11.5px;color:#242424;transform:scaleX(1.0514);transform-origin:0 0;">Add-ins</div>
<div class="a" style="left:1506px;top:83px;width:1px;height:89px;background:#e1dfe2;"></div>
<svg style="left:1524px;top:87px;" width="28" height="28" viewBox="0 0 28 28"><rect x="0.5" y="0.5" width="27" height="27" fill="#fff" stroke="#424242" stroke-width="1.1"/><rect x="1" y="1" width="26" height="3" fill="#bdbdbd"/><path d="M0.5 4 H27.5 M0.5 20 H27.5 M9 20 V27.5 M18 20 V27.5" stroke="#7a7a7a" stroke-width="0.8"/><circle cx="13" cy="12" r="8" fill="#fff" stroke="#424242" stroke-width="1.2"/><path d="M18.5 17.5 L27 27" stroke="#424242" stroke-width="1.3"/><rect x="9" y="11" width="2" height="4" fill="#1b82d1"/><rect x="12" y="8" width="2" height="7" fill="#1b82d1"/><rect x="15" y="10" width="2" height="5" fill="#1b82d1"/></svg>
<div class="t" style="left:1517.00px;top:122.27px;font-size:11.5px;line-height:11.5px;color:#242424;transform:scaleX(1.0021);transform-origin:0 0;">Analyze</div>
<div class="t" style="left:1526.00px;top:138.27px;font-size:11.5px;line-height:11.5px;color:#242424;transform:scaleX(0.9880);transform-origin:0 0;">Data</div>
<div class="a" style="left:1569px;top:83px;width:1px;height:89px;background:#e1dfe2;"></div>
<svg style="left:1586px;top:85px;" width="32" height="31" viewBox="0 0 32 31"><path d="M6 13 C9 14.5 12 16 18 17 C22 16 27 13 31 9 V24 C27 27.5 22 30 18 30.5 C12 29.5 9 28 6 26.5 Z" fill="#22a538"/><path d="M6 17.5 C9 19 12 20.5 18 21.5 C22 20.5 27 18 31 14 M6 22 C9 23.5 12 25 18 26 C22 25 27 22.5 31 19 M12 14.5 V29 M18 17 V30.5 M24 15 V28.5" fill="none" stroke="#fff" stroke-width="1"/><rect x="14.5" y="21" width="6" height="4.5" fill="#2b2424"/><path d="M0.5 10.5 C6 7.5 13 9 17.5 20 C20 11 25 4 33 0.5 C27 5 21.5 12 18.5 23 L16 23 C13 15 8 10.5 0.5 10.5 Z" fill="#2e2e2e"/></svg>
<div class="t" style="left:1582.00px;top:122.27px;font-size:11.5px;line-height:11.5px;color:#242424;transform:scaleX(1.0608);transform-origin:0 0;">xlwings</div>
<div class="t" style="left:1594.00px;top:138.27px;font-size:11.5px;line-height:11.5px;color:#242424;transform:scaleX(0.9708);transform-origin:0 0;">Lite</div>
<div class="t" style="left:1572.00px;top:162.27px;font-size:11.5px;line-height:11.5px;color:#242424;transform:scaleX(0.9925);transform-origin:0 0;">xlwings Lite</div>
<div class="a" style="left:1636px;top:83px;width:1px;height:89px;background:#e1dfe2;"></div>
<svg style="left:1669px;top:89px;" width="26" height="28" viewBox="0 0 26 28"><path d="M1 1 H13 L18 6 V14 M10 24 H1 Z" fill="none" stroke="#5b7fc7" stroke-width="1.1"/><path d="M1 1 V24" stroke="#5b7fc7" stroke-width="1.1"/><path d="M13 1 V6 H18" fill="none" stroke="#5b7fc7" stroke-width="1"/><path d="M5 17 C8 13 9 9 8 7 C7 9 10 13 14 14 C10 14 7 15 5 17 Z" fill="none" stroke="#5b7fc7" stroke-width="0.9"/><path d="M15 19 L20 14 A2.5 2.5 0 0 1 23.5 17.5 L18.5 22.5 M17 24 L12.5 28 A2.5 2.5 0 0 1 9 24.5 L14 20" fill="none" stroke="#5b7fc7" stroke-width="1.3"/></svg>
<div class="t" style="left:1661.00px;top:122.27px;font-size:11.5px;line-height:11.5px;color:#242424;transform:scaleX(0.9850);transform-origin:0 0;">Create</div>
<div class="t" style="left:1663.00px;top:138.27px;font-size:11.5px;line-height:11.5px;color:#242424;transform:scaleX(0.9205);transform-origin:0 0;">a PDF</div>
<div class="t" style="left:1639.00px;top:162.27px;font-size:11.5px;line-height:11.5px;color:#242424;transform:scaleX(1.0206);transform-origin:0 0;">Adobe Acrobat</div>
<div class="a" style="left:1720px;top:83px;width:1px;height:89px;background:#e1dfe2;"></div>
<svg style="left:1735px;top:87px;" width="28" height="28" viewBox="0 0 28 28"><path d="M13.5 0.5 C8 0.5 8 3 8 5 V8 H14 V9 H4.5 C1.5 9 0 11.5 0 15 C0 18.5 1.5 21 4.5 21 H7.5 V17 C7.5 14.5 9 13 11.5 13 H17 C19 13 20 12 20 10 V5 C20 2.5 18 0.5 13.5 0.5 Z" fill="#2f86d6"/><path d="M14.5 27.5 C20 27.5 20 25 20 23 V20 H14 V19 H23.5 C26.5 19 28 16.5 28 13 C28 9.5 26.5 7 23.5 7 H20.5 V11 C20.5 13.5 19 15 16.5 15 H11 C9 15 8 16 8 18 V23 C8 25.5 10 27.5 14.5 27.5 Z" fill="#2f86d6"/><circle cx="11" cy="3.8" r="1.2" fill="#fff"/><circle cx="17" cy="24.2" r="1.2" fill="#fff"/></svg>
<div class="t" style="left:1735.00px;top:122.27px;font-size:11.5px;line-height:11.5px;color:#242424;transform:scaleX(1.0083);transform-origin:0 0;">Insert</div>
<div class="t" style="left:1730.00px;top:138.27px;font-size:11.5px;line-height:11.5px;color:#242424;transform:scaleX(1.0613);transform-origin:0 0;">Python</div>
<div class="t" style="left:1731.00px;top:162.27px;font-size:11.5px;line-height:11.5px;color:#242424;transform:scaleX(1.0055);transform-origin:0 0;">Python</div>
<div class="a" style="left:1778px;top:83px;width:1px;height:89px;background:#e1dfe2;"></div>
<svg style="left:1892px;top:162px;" width="11" height="6" viewBox="0 0 11 6"><path d="M0.8 0.8 L5.5 5 L10.2 0.8" fill="none" stroke="#424242" stroke-width="1.2"/></svg>
<div class="a" style="left:8px;top:187px;width:229px;height:25px;background:#fff;border:1px solid #d6d3d8;border-radius:5px"></div>
<div class="t" style="left:15px;top:192px;font-size:13px;line-height:16px;color:#242424;font-weight:normal;">D18</div>
<svg style="left:216px;top:196px;" width="11" height="6" viewBox="0 0 11 6"><path d="M0.8 0.8 L5.5 5 L10.2 0.8" fill="none" stroke="#424242" stroke-width="1.2"/></svg>
<div class="a" style="left:247px;top:194px;width:2px;height:2px;background:#424242;border-radius:1px"></div>
<div class="a" style="left:247px;top:199px;width:2px;height:2px;background:#424242;border-radius:1px"></div>
<div class="a" style="left:247px;top:204px;width:2px;height:2px;background:#424242;border-radius:1px"></div>
<div class="a" style="left:259px;top:187px;width:85px;height:25px;background:#fff;border:1px solid #d6d3d8;border-radius:5px"></div>
<svg style="left:265px;top:193px;" width="12" height="12" viewBox="0 0 12 12"><path d="M0.5 0.5 L11.5 11.5 M11.5 0.5 L0.5 11.5" stroke="#a9a7ab" stroke-width="1"/></svg>
<svg style="left:287px;top:193px;" width="16" height="12" viewBox="0 0 16 12"><path d="M0.5 6.5 L5.5 11.5 L15.5 1" fill="none" stroke="#a9a7ab" stroke-width="1"/></svg>
<div class="t" style="left:312.00px;top:189.76px;font-size:18px;line-height:18px;color:#2b2b2b;font-style:italic;font-family:'Liberation Serif',serif;transform:scaleX(1.0000);transform-origin:0 0;">fx</div>
<svg style="left:331px;top:197px;" width="10" height="6" viewBox="0 0 10 6"><path d="M0.8 0.8 L5 5 L9.2 0.8" fill="none" stroke="#7a7a7a" stroke-width="1"/></svg>
<div class="a" style="left:349px;top:187px;width:1563px;height:25px;background:#fff;border:1px solid #d6d3d8;border-radius:5px"></div>
<svg style="left:1897px;top:196px;" width="11" height="6" viewBox="0 0 11 6"><path d="M0.8 0.8 L5.5 5 L10.2 0.8" fill="none" stroke="#424242" stroke-width="1.2"/></svg>
<div class="a" style="left:0px;top:219px;width:1898px;height:19px;background:#f0eef1;"></div>
<div class="a" style="left:427px;top:219px;width:251px;height:19px;background:#e1dfe2;"></div>
<div class="a" style="left:427px;top:237px;width:251px;height:2px;background:#1e6b41;"></div>
<svg style="left:9px;top:222px;" width="13" height="13" viewBox="0 0 13 13"><path d="M12 1 V12 H1 Z" fill="#dcdadd"/></svg>
<div class="t" style="left:74.0px;top:221px;font-size:13px;line-height:16px;color:#424242;font-weight:normal;transform:translateX(-50%);">A</div>
<div class="t" style="left:234.5px;top:221px;font-size:13px;line-height:16px;color:#424242;font-weight:normal;transform:translateX(-50%);">B</div>
<div class="t" style="left:386.5px;top:221px;font-size:13px;line-height:16px;color:#424242;font-weight:normal;transform:translateX(-50%);">C</div>
<div class="t" style="left:552.5px;top:221px;font-size:13px;line-height:16px;color:#424242;font-weight:normal;transform:translateX(-50%);">D</div>
<div class="t" style="left:742.5px;top:221px;font-size:13px;line-height:16px;color:#424242;font-weight:normal;transform:translateX(-50%);">E</div>
<div class="t" style="left:867.5px;top:221px;font-size:13px;line-height:16px;color:#424242;font-weight:normal;transform:translateX(-50%);">F</div>
<div class="t" style="left:1242.5px;top:221px;font-size:13px;line-height:16px;color:#424242;font-weight:normal;transform:translateX(-50%);">G</div>
<div class="t" style="left:1764px;top:221px;font-size:13px;line-height:16px;color:#424242;font-weight:normal;transform:translateX(-50%);">H</div>
<div class="a" style="left:123px;top:219px;width:1px;height:19px;background:#d9d7da;"></div>
<div class="a" style="left:346px;top:219px;width:1px;height:19px;background:#d9d7da;"></div>
<div class="a" style="left:427px;top:219px;width:1px;height:19px;background:#d9d7da;"></div>
<div class="a" style="left:678px;top:219px;width:1px;height:19px;background:#d9d7da;"></div>
<div class="a" style="left:807px;top:219px;width:1px;height:19px;background:#d9d7da;"></div>
<div class="a" style="left:928px;top:219px;width:1px;height:19px;background:#d9d7da;"></div>
<div class="a" style="left:1557px;top:219px;width:1px;height:19px;background:#d9d7da;"></div>
<div class="a" style="left:25px;top:238px;width:1873px;height:1px;background:#9e9c9f;"></div>
<div class="a" style="left:0px;top:238px;width:25px;height:787px;background:#f0eef1;"></div>
<div class="a" style="left:25px;top:238px;width:1px;height:787px;background:#9e9c9f;"></div>
<div class="a" style="left:26px;top:239px;width:1872px;height:786px;background:#fff;"></div>
<div class="a" style="left:0px;top:897px;width:23px;height:33px;background:#e1dfe2;"></div>
<div class="a" style="left:23px;top:897px;width:2px;height:34px;background:#1e6b41;"></div>
<div class="a" style="left:0px;top:325px;width:23px;height:1px;background:#dedcdf;"></div>
<div class="t" style="left:9.74px;top:311.49px;font-size:11px;line-height:11px;color:#424242;">1</div>
<div class="a" style="left:0px;top:390px;width:23px;height:1px;background:#dedcdf;"></div>
<div class="t" style="left:9.74px;top:376.49px;font-size:11px;line-height:11px;color:#424242;">2</div>
<div class="a" style="left:0px;top:430px;width:23px;height:1px;background:#dedcdf;"></div>
<div class="t" style="left:9.74px;top:416.49px;font-size:11px;line-height:11px;color:#424242;">3</div>
<div class="a" style="left:0px;top:468px;width:23px;height:1px;background:#dedcdf;"></div>
<div class="t" style="left:9.74px;top:454.49px;font-size:11px;line-height:11px;color:#424242;">4</div>
<div class="a" style="left:0px;top:501px;width:23px;height:1px;background:#dedcdf;"></div>
<div class="t" style="left:9.74px;top:487.49px;font-size:11px;line-height:11px;color:#424242;">5</div>
<div class="a" style="left:0px;top:534px;width:23px;height:1px;background:#dedcdf;"></div>
<div class="t" style="left:9.74px;top:520.49px;font-size:11px;line-height:11px;color:#424242;">6</div>
<div class="a" style="left:0px;top:567px;width:23px;height:1px;background:#dedcdf;"></div>
<div class="t" style="left:9.74px;top:553.49px;font-size:11px;line-height:11px;color:#424242;">7</div>
<div class="a" style="left:0px;top:600px;width:23px;height:1px;background:#dedcdf;"></div>
<div class="t" style="left:9.74px;top:586.49px;font-size:11px;line-height:11px;color:#424242;">8</div>
<div class="a" style="left:0px;top:633px;width:23px;height:1px;background:#dedcdf;"></div>
<div class="t" style="left:9.74px;top:619.49px;font-size:11px;line-height:11px;color:#424242;">9</div>
<div class="a" style="left:0px;top:666px;width:23px;height:1px;background:#dedcdf;"></div>
<div class="t" style="left:6.68px;top:652.49px;font-size:11px;line-height:11px;color:#424242;">10</div>
<div class="a" style="left:0px;top:699px;width:23px;height:1px;background:#dedcdf;"></div>
<div class="t" style="left:7.09px;top:685.49px;font-size:11px;line-height:11px;color:#424242;">11</div>
<div class="a" style="left:0px;top:732px;width:23px;height:1px;background:#dedcdf;"></div>
<div class="t" style="left:6.68px;top:718.49px;font-size:11px;line-height:11px;color:#424242;">12</div>
<div class="a" style="left:0px;top:765px;width:23px;height:1px;background:#dedcdf;"></div>
<div class="t" style="left:6.68px;top:751.49px;font-size:11px;line-height:11px;color:#424242;">13</div>
<div class="a" style="left:0px;top:798px;width:23px;height:1px;background:#dedcdf;"></div>
<div class="t" style="left:6.68px;top:784.49px;font-size:11px;line-height:11px;color:#424242;">14</div>
<div class="a" style="left:0px;top:831px;width:23px;height:1px;background:#dedcdf;"></div>
<div class="t" style="left:6.68px;top:817.49px;font-size:11px;line-height:11px;color:#424242;">15</div>
<div class="a" style="left:0px;top:864px;width:23px;height:1px;background:#dedcdf;"></div>
<div class="t" style="left:6.68px;top:850.49px;font-size:11px;line-height:11px;color:#424242;">16</div>
<div class="a" style="left:0px;top:897px;width:23px;height:1px;background:#dedcdf;"></div>
<div class="t" style="left:6.68px;top:883.49px;font-size:11px;line-height:11px;color:#424242;">17</div>
<div class="a" style="left:0px;top:930px;width:23px;height:1px;background:#dedcdf;"></div>
<div class="t" style="left:6.68px;top:916.49px;font-size:11px;line-height:11px;color:#1e6b41;">18</div>
<div class="a" style="left:0px;top:963px;width:23px;height:1px;background:#dedcdf;"></div>
<div class="t" style="left:6.68px;top:949.49px;font-size:11px;line-height:11px;color:#424242;">19</div>
<div class="a" style="left:0px;top:996px;width:23px;height:1px;background:#dedcdf;"></div>
<div class="t" style="left:6.68px;top:982.49px;font-size:11px;line-height:11px;color:#424242;">20</div>
<div class="t" style="left:6.68px;top:1015.49px;font-size:11px;line-height:11px;color:#424242;">21</div>
<div class="a" style="left:124px;top:263px;width:250px;height:67px;background:rgba(0,0,0,0.22);border-radius:11px;filter:blur(2px)"></div>
<div class="a" style="left:122px;top:261px;width:250px;height:66px;background:#548235;border:1.5px solid #2f4a22;border-radius:11px"></div>
<div class="t" style="left:161.80px;top:280.45px;font-size:29px;line-height:29px;color:#fbfdf7;font-weight:bold;transform:scaleX(0.9397);transform-origin:0 0;">Send E-Mails</div>
<div class="a" style="left:124px;top:348px;width:212px;height:36px;background:#2e75b6;border:1px solid #2a5f94;border-radius:7px"></div>
<div class="t" style="left:146.00px;top:360.42px;font-size:12.5px;line-height:12.5px;color:#f7fafd;font-weight:bold;transform:scaleX(1.0059);transform-origin:0 0;">Need Help? Check the Docs</div>
<div class="a" style="left:431px;top:368px;width:222px;height:19px;background:#fffdd0;border:1px solid #7c7c7c"></div>
<div class="t" style="left:500.50px;top:371.84px;font-size:12px;line-height:12px;color:#db4a42;font-weight:bold;transform:scaleX(0.9939);transform-origin:0 0;">INPUT FIELDS</div>
<div class="a" style="left:1631px;top:349px;width:212px;height:36px;background:#dcdadd;border:1.3px solid #5a5a5a;border-radius:7px"></div>
<div class="t" style="left:1653.00px;top:360.92px;font-size:12.5px;line-height:12.5px;color:#3f3f3f;font-weight:bold;transform:scaleX(1.0198);transform-origin:0 0;">Select &amp; Copy Attachments</div>
<div class="a" style="left:123px;top:389px;width:1775px;height:42px;background:#595959;"></div>
<div class="a" style="left:123px;top:389px;width:1775px;height:2px;background:#7a7a7a;"></div>
<div class="a" style="left:123px;top:429px;width:1775px;height:2px;background:#7f7f7f;"></div>
<div class="a" style="left:123px;top:431px;width:1775px;height:37px;background:#d9d4d9;"></div>
<div class="a" style="left:25px;top:431px;width:98px;height:37px;background:#595959;"></div>
<div class="a" style="left:123px;top:467px;width:1775px;height:2px;background:#7f7f7f;"></div>
<div class="a" style="left:25px;top:429px;width:98px;height:2px;background:#7f7f7f;"></div>
<div class="a" style="left:25px;top:467px;width:98px;height:2px;background:#7f7f7f;"></div>
<svg style="left:124px;top:431px" width="303" height="36"><defs><pattern id="dots" width="8" height="4" patternUnits="userSpaceOnUse"><rect x="1" y="1" width="1.2" height="1.2" fill="#111"/><rect x="5" y="3" width="1.2" height="1.2" fill="#111"/></pattern></defs><rect width="303" height="36" fill="#dcd8dc"/><rect width="303" height="36" fill="url(#dots)"/></svg>
<div class="a" style="left:123px;top:469px;width:223px;height:556px;background:#f2eff3;"></div>
<div class="a" style="left:346px;top:469px;width:1552px;height:556px;background:#fefcd1;"></div>
<div class="a" style="left:123px;top:501px;width:223px;height:1px;background:#7f7d80;"></div>
<div class="a" style="left:346px;top:501px;width:1552px;height:1px;background:#858170;"></div>
<div class="a" style="left:123px;top:534px;width:223px;height:1px;background:#7f7d80;"></div>
<div class="a" style="left:346px;top:534px;width:1552px;height:1px;background:#858170;"></div>
<div class="a" style="left:123px;top:567px;width:223px;height:1px;background:#7f7d80;"></div>
<div class="a" style="left:346px;top:567px;width:1552px;height:1px;background:#858170;"></div>
<div class="a" style="left:123px;top:600px;width:223px;height:1px;background:#7f7d80;"></div>
<div class="a" style="left:346px;top:600px;width:1552px;height:1px;background:#858170;"></div>
<div class="a" style="left:123px;top:633px;width:223px;height:1px;background:#7f7d80;"></div>
<div class="a" style="left:346px;top:633px;width:1552px;height:1px;background:#858170;"></div>
<div class="a" style="left:123px;top:666px;width:223px;height:1px;background:#7f7d80;"></div>
<div class="a" style="left:346px;top:666px;width:1552px;height:1px;background:#858170;"></div>
<div class="a" style="left:123px;top:699px;width:223px;height:1px;background:#7f7d80;"></div>
<div class="a" style="left:346px;top:699px;width:1552px;height:1px;background:#858170;"></div>
<div class="a" style="left:123px;top:732px;width:223px;height:1px;background:#7f7d80;"></div>
<div class="a" style="left:346px;top:732px;width:1552px;height:1px;background:#858170;"></div>
<div class="a" style="left:123px;top:765px;width:223px;height:1px;background:#7f7d80;"></div>
<div class="a" style="left:346px;top:765px;width:1552px;height:1px;background:#858170;"></div>
<div class="a" style="left:123px;top:798px;width:223px;height:1px;background:#7f7d80;"></div>
<div class="a" style="left:346px;top:798px;width:1552px;height:1px;background:#858170;"></div>
<div class="a" style="left:123px;top:831px;width:223px;height:1px;background:#7f7d80;"></div>
<div class="a" style="left:346px;top:831px;width:1552px;height:1px;background:#858170;"></div>
<div class="a" style="left:123px;top:864px;width:223px;height:1px;background:#7f7d80;"></div>
<div class="a" style="left:346px;top:864px;width:1552px;height:1px;background:#858170;"></div>
<div class="a" style="left:123px;top:897px;width:223px;height:1px;background:#7f7d80;"></div>
<div class="a" style="left:346px;top:897px;width:1552px;height:1px;background:#858170;"></div>
<div class="a" style="left:123px;top:930px;width:223px;height:1px;background:#7f7d80;"></div>
<div class="a" style="left:346px;top:930px;width:1552px;height:1px;background:#858170;"></div>
<div class="a" style="left:123px;top:963px;width:223px;height:1px;background:#7f7d80;"></div>
<div class="a" style="left:346px;top:963px;width:1552px;height:1px;background:#858170;"></div>
<div class="a" style="left:123px;top:996px;width:223px;height:1px;background:#7f7d80;"></div>
<div class="a" style="left:346px;top:996px;width:1552px;height:1px;background:#858170;"></div>
<div class="a" style="left:346px;top:389px;width:1px;height:636px;background:#7c7968;"></div>
<div class="a" style="left:345.5px;top:389px;width:2px;height:80px;background:#7a7a7a;"></div>
<div class="a" style="left:427px;top:389px;width:1px;height:636px;background:#7c7968;"></div>
<div class="a" style="left:426.5px;top:389px;width:2px;height:80px;background:#7a7a7a;"></div>
<div class="a" style="left:678px;top:389px;width:1px;height:636px;background:#7c7968;"></div>
<div class="a" style="left:677.5px;top:389px;width:2px;height:80px;background:#7a7a7a;"></div>
<div class="a" style="left:807px;top:389px;width:1px;height:636px;background:#7c7968;"></div>
<div class="a" style="left:806.5px;top:389px;width:2px;height:80px;background:#7a7a7a;"></div>
<div class="a" style="left:928px;top:389px;width:1px;height:636px;background:#7c7968;"></div>
<div class="a" style="left:927.5px;top:389px;width:2px;height:80px;background:#7a7a7a;"></div>
<div class="a" style="left:1557px;top:389px;width:1px;height:636px;background:#7c7968;"></div>
<div class="a" style="left:1556.5px;top:389px;width:2px;height:80px;background:#7a7a7a;"></div>
<div class="a" style="left:122px;top:389px;width:2px;height:636px;background:#6f6f6f;"></div>
<div class="t" style="left:214.00px;top:404.65px;font-size:14px;line-height:14px;color:#ffffff;font-weight:bold;transform:scaleX(0.9582);transform-origin:0 0;">Status</div>
<div class="t" style="left:372.00px;top:404.65px;font-size:14px;line-height:14px;color:#ffffff;font-weight:bold;transform:scaleX(0.8765);transform-origin:0 0;">Send</div>
<div class="t" style="left:525.00px;top:404.65px;font-size:14px;line-height:14px;color:#ffffff;font-weight:bold;transform:scaleX(0.9592);transform-origin:0 0;">Receiver</div>
<div class="t" style="left:734.00px;top:404.65px;font-size:14px;line-height:14px;color:#ffffff;font-weight:bold;transform:scaleX(0.8902);transform-origin:0 0;">CC</div>
<div class="t" style="left:856.00px;top:404.65px;font-size:14px;line-height:14px;color:#ffffff;font-weight:bold;transform:scaleX(0.7912);transform-origin:0 0;">BCC</div>
<div class="t" style="left:1219.00px;top:404.65px;font-size:14px;line-height:14px;color:#ffffff;font-weight:bold;transform:scaleX(0.9492);transform-origin:0 0;">Subject</div>
<div class="t" style="left:1720.00px;top:404.65px;font-size:14px;line-height:14px;color:#ffffff;font-weight:bold;transform:scaleX(0.9403);transform-origin:0 0;">Attachment(s)</div>
<svg style="left:421px;top:391px;" width="6" height="6" viewBox="0 0 6 6"><path d="M0 0 H6 V6 Z" fill="#e8141a"/></svg>
<svg style="left:672px;top:391px;" width="6" height="6" viewBox="0 0 6 6"><path d="M0 0 H6 V6 Z" fill="#e8141a"/></svg>
<svg style="left:801px;top:391px;" width="6" height="6" viewBox="0 0 6 6"><path d="M0 0 H6 V6 Z" fill="#e8141a"/></svg>
<svg style="left:922px;top:391px;" width="6" height="6" viewBox="0 0 6 6"><path d="M0 0 H6 V6 Z" fill="#e8141a"/></svg>
<div class="t" style="left:45.00px;top:437.42px;font-size:12.5px;line-height:12.5px;color:#ffffff;font-weight:bold;transform:scaleX(0.9929);transform-origin:0 0;">EXAMPLE</div>
<div class="t" style="left:40.00px;top:454.96px;font-size:9.5px;line-height:9.5px;color:#f0f0f0;font-style:italic;transform:scaleX(1.0662);transform-origin:0 0;">(Do not delete)</div>
<div class="t" style="left:430.00px;top:444.89px;font-size:11px;line-height:11px;color:#202020;transform:scaleX(1.1124);transform-origin:0 0;">john@outlook.com;peter@gmail.com</div>
<div class="t" style="left:681.00px;top:444.89px;font-size:11px;line-height:11px;color:#202020;transform:scaleX(1.0781);transform-origin:0 0;">kumar@yahoo.com</div>
<div class="t" style="left:931.00px;top:444.89px;font-size:11px;line-height:11px;color:#202020;transform:scaleX(1.0765);transform-origin:0 0;">Special Offer Just for You, {{Receiver_Name}}!</div>
<div class="t" style="left:1560.00px;top:444.89px;font-size:11px;line-height:11px;color:#202020;transform:scaleX(1.1015);transform-origin:0 0;">C:\Users\example.txt<span style='color:#e8141a'>;</span>C:\Users\example2.txt</div>
<div class="t" style="left:430.00px;top:478.80px;font-size:13px;line-height:13px;color:#0563c1;transform:scaleX(1.0848);transform-origin:0 0;text-decoration:underline;">codingisfun.testuser@gmail.com</div>
<div class="t" style="left:931.00px;top:478.80px;font-size:13px;line-height:13px;color:#1a1a1a;transform:scaleX(1.1029);transform-origin:0 0;">{{Receiver_Name}}, [[just a quick update|thought this might be useful|some info you might like]]</div>
<div class="a" style="left:426px;top:896px;width:254px;height:36px;background:none;border:2px solid #1e6b41"></div>
<div class="a" style="left:676px;top:928px;width:6px;height:6px;background:#1e6b41;border:1px solid #fffcd1"></div>
<svg style="left:0px;top:480px;" width="130" height="100" viewBox="0 0 130 100"><defs><linearGradient id="hg" x1="0" y1="0" x2="1" y2="0"><stop offset="0" stop-color="#ffc629"/><stop offset="0.6" stop-color="#ffc120"/><stop offset="1" stop-color="#ffb000"/></linearGradient></defs>
<path d="M10 39 C16 35 22 31 29 27 L63 11.5 C70 8 75 13 72 19.5 C70 23 62 28 49 32.5 L106 32.5 A7.6 7.6 0 0 1 106 47.7 L88 47.7 C89.5 52 88.5 57 85.5 61.5 C87 65.5 86 71 79 76 C80 80 77.5 88.5 70 89.5 C50 90.5 28 85 10 79 Z" fill="url(#hg)" stroke="#eaa300" stroke-width="0.9"/>
<path d="M70 47.2 H88 M70 61.6 H85.5 M71 76.4 H80" stroke="#e39c00" stroke-width="1" fill="none"/></svg>
<svg style="left:690px;top:570px" width="110" height="130" viewBox="690 570 110 130"><defs><filter id="cb" x="-50%" y="-50%" width="200%" height="200%"><feGaussianBlur stdDeviation="3"/></filter></defs>
<path d="M713 594 L713 667 L732 651 L746 679 L757 673 L743 647 L768 647 Z" fill="rgba(70,70,50,0.5)" stroke="rgba(70,70,50,0.5)" stroke-width="4" stroke-linejoin="round" filter="url(#cb)"/>
<path d="M718 591 Q718 588 720.5 590 L771 640 Q773.5 642.5 770 642.5 L749 642.5 L761 666 Q762 668 760 669 L753 672.5 Q751 673.5 750 671.5 L737.5 646 L720.5 660.5 Q718 662.5 718 659.5 Z" fill="#f1f1f5" stroke="#050505" stroke-width="4.2" stroke-linejoin="round"/></svg>
<div class="a" style="left:0px;top:1025px;width:1920px;height:31px;background:#eeebef;"></div>
<div class="a" style="left:0px;top:1056px;width:1920px;height:24px;background:#f5f4f6;"></div>
<svg style="left:28px;top:1036px;" width="8" height="10" viewBox="0 0 8 10"><path d="M7 0.5 L1.5 5 L7 9.5" fill="none" stroke="#a09ea2" stroke-width="1.1"/></svg>
<svg style="left:60px;top:1036px;" width="8" height="10" viewBox="0 0 8 10"><path d="M1 0.5 L6.5 5 L1 9.5" fill="none" stroke="#a09ea2" stroke-width="1.1"/></svg>
<div class="a" style="left:116px;top:1029px;width:79px;height:24px;background:#ee0d0d;border-radius:4px"></div>
<div class="t" style="left:125.00px;top:1034.30px;font-size:13px;line-height:13px;color:#ffffff;transform:scaleX(0.9230);transform-origin:0 0;">SETTINGS</div>
<div class="a" style="left:200px;top:1031px;width:1px;height:20px;background:#d6d4d7;"></div>
<div class="a" style="left:203px;top:1025px;width:85px;height:28px;background:linear-gradient(#fcfdfb,#e9f1e2);border-radius:0 0 4px 4px;box-shadow:0 1px 2px rgba(0,0,0,.15)"></div>
<div class="t" style="left:212.00px;top:1031.70px;font-size:13px;line-height:13px;color:#1a1a1a;transform:scaleX(0.9533);transform-origin:0 0;">SEND_LIST</div>
<div class="a" style="left:212px;top:1048px;width:68px;height:2px;background:#107c41;border-radius:1px"></div>
<div class="a" style="left:292px;top:1031px;width:1px;height:20px;background:#d6d4d7;"></div>
<div class="a" style="left:296px;top:1029px;width:100px;height:24px;background:#ffff00;border-radius:4px"></div>
<div class="t" style="left:306.00px;top:1034.30px;font-size:13px;line-height:13px;color:#1a1a1a;transform:scaleX(0.9749);transform-origin:0 0;">EMAIL_BODY</div>
<div class="a" style="left:400px;top:1031px;width:1px;height:20px;background:#d6d4d7;"></div>
<div class="a" style="left:404px;top:1029px;width:116px;height:24px;background:#ffffff;border-radius:4px"></div>
<div class="t" style="left:414.00px;top:1034.30px;font-size:13px;line-height:13px;color:#1a1a1a;transform:scaleX(0.9988);transform-origin:0 0;">Example_Range</div>
<div class="a" style="left:524px;top:1031px;width:1px;height:20px;background:#d6d4d7;"></div>
<svg style="left:566px;top:1035px;" width="12" height="12" viewBox="0 0 12 12"><path d="M6 0.5 V11.5 M0.5 6 H11.5" stroke="#424242" stroke-width="1.1"/></svg>
<div class="a" style="left:1170px;top:1029px;width:728px;height:22px;background:#f5f4f6;border-radius:3px"></div>
<div class="a" style="left:1154px;top:1036px;width:2px;height:2px;background:#424242;border-radius:1px"></div>
<div class="a" style="left:1154px;top:1040px;width:2px;height:2px;background:#424242;border-radius:1px"></div>
<div class="a" style="left:1154px;top:1044px;width:2px;height:2px;background:#424242;border-radius:1px"></div>
<svg style="left:1176px;top:1036px;" width="8" height="9" viewBox="0 0 8 9"><path d="M7.5 0 V9 L0 4.5 Z" fill="#6e6c6f"/></svg>
<div class="a" style="left:1188px;top:1036px;width:302px;height:9px;background:#6e6c6f;border-radius:4.5px"></div>
<svg style="left:1889px;top:1037px;" width="8" height="9" viewBox="0 0 8 9"><path d="M0 0 V9 L7.5 4.5 Z" fill="#6e6c6f"/></svg>
<div class="a" style="left:1898px;top:219px;width:22px;height:806px;background:#f3f2f4;"></div>
<svg style="left:1905px;top:224px;" width="10" height="8" viewBox="0 0 10 8"><path d="M5 0 L10 7.5 H0 Z" fill="#6e6c6f"/></svg>
<div class="a" style="left:1905px;top:236px;width:9px;height:58px;background:#6e6c6f;border-radius:4.5px"></div>
<svg style="left:1905px;top:1015px;" width="10" height="8" viewBox="0 0 10 8"><path d="M0 0 H10 L5 7.5 Z" fill="#6e6c6f"/></svg>
<div class="t" style="left:12.50px;top:1062.27px;font-size:11.5px;line-height:11.5px;color:#424242;transform:scaleX(0.9175);transform-origin:0 0;">Ready</div>
<svg style="left:62px;top:1062px;" width="15" height="13" viewBox="0 0 15 13"><rect x="0.5" y="0.5" width="13" height="11" fill="none" stroke="#424242" stroke-width="1"/><path d="M0.5 3 H13.5 M3 5.5 H6 M3 8 H5" stroke="#424242" stroke-width="1"/><circle cx="10.5" cy="9" r="3.2" fill="#fff" stroke="#424242" stroke-width="1"/><circle cx="10.5" cy="9" r="1.4" fill="#424242"/></svg>
<svg style="left:94px;top:1061px;" width="15" height="15" viewBox="0 0 15 15"><circle cx="7" cy="2" r="1.6" fill="none" stroke="#424242" stroke-width="1"/><path d="M1 5 L7 6 L13 5 M7 6 V9 L4 14 M7 9 L10 14" fill="none" stroke="#424242" stroke-width="1"/><path d="M9 9.5 L14 14.5 M14 9.5 L9 14.5" stroke="#424242" stroke-width="1"/></svg>
<div class="t" style="left:112.50px;top:1062.27px;font-size:11.5px;line-height:11.5px;color:#2b2b2b;font-weight:bold;transform:scaleX(0.9133);transform-origin:0 0;">Accessibility: Investigate</div>
<svg style="left:1502px;top:1062px;" width="15" height="14" viewBox="0 0 15 14"><path d="M11 0.5 H0.5 V9.5 H5" fill="none" stroke="#424242" stroke-width="1"/><path d="M11 0.5 H14.5 V6" fill="none" stroke="#424242" stroke-width="1"/><circle cx="10.5" cy="10" r="2.5" fill="none" stroke="#424242" stroke-width="1.3" stroke-dasharray="1.4 0.8"/></svg>
<div class="t" style="left:1519.50px;top:1063.04px;font-size:12px;line-height:12px;color:#2b2b2b;transform:scaleX(0.9414);transform-origin:0 0;">Display Settings</div>
<div class="a" style="left:1620px;top:1058px;width:40px;height:22px;background:#dedcdf;border-radius:3px"></div>
<svg style="left:1633px;top:1061px;" width="14" height="14" viewBox="0 0 14 14"><rect x="0.5" y="0.5" width="13" height="13" fill="none" stroke="#424242" stroke-width="1"/><path d="M4.8 0.5 V13.5 M9.2 0.5 V13.5 M0.5 4.8 H13.5 M0.5 9.2 H13.5" stroke="#424242" stroke-width="1"/></svg>
<svg style="left:1673px;top:1061px;" width="14" height="14" viewBox="0 0 14 14"><rect x="0.5" y="0.5" width="13" height="13" fill="none" stroke="#424242" stroke-width="1"/><rect x="3" y="3" width="8" height="8" fill="none" stroke="#424242" stroke-width="1"/><path d="M4.5 5.5 H9.5 M4.5 7.5 H9.5" stroke="#424242" stroke-width="0.8"/></svg>
<svg style="left:1713px;top:1061px;" width="14" height="14" viewBox="0 0 14 14"><rect x="0.5" y="0.5" width="13" height="13" fill="none" stroke="#424242" stroke-width="1"/><path d="M0.5 7.5 H6.5 V0.5 M6.5 4 H10 V0.5" fill="none" stroke="#424242" stroke-width="1"/></svg>
<div class="a" style="left:1746px;top:1068px;width:8px;height:1px;background:#424242;"></div>
<div class="a" style="left:1760px;top:1068px;width:100px;height:1px;background:#8a888b;"></div>
<div class="a" style="left:1806px;top:1061px;width:5px;height:13px;background:#5a585b;border-radius:1px"></div>
<svg style="left:1865px;top:1064px;" width="9" height="9" viewBox="0 0 9 9"><path d="M4.5 0 V9 M0 4.5 H9" stroke="#424242" stroke-width="1"/></svg>
<div class="t" style="left:1886.00px;top:1062.77px;font-size:11.5px;line-height:11.5px;color:#424242;transform:scaleX(0.8840);transform-origin:0 0;">100%</div>
</body></html>
